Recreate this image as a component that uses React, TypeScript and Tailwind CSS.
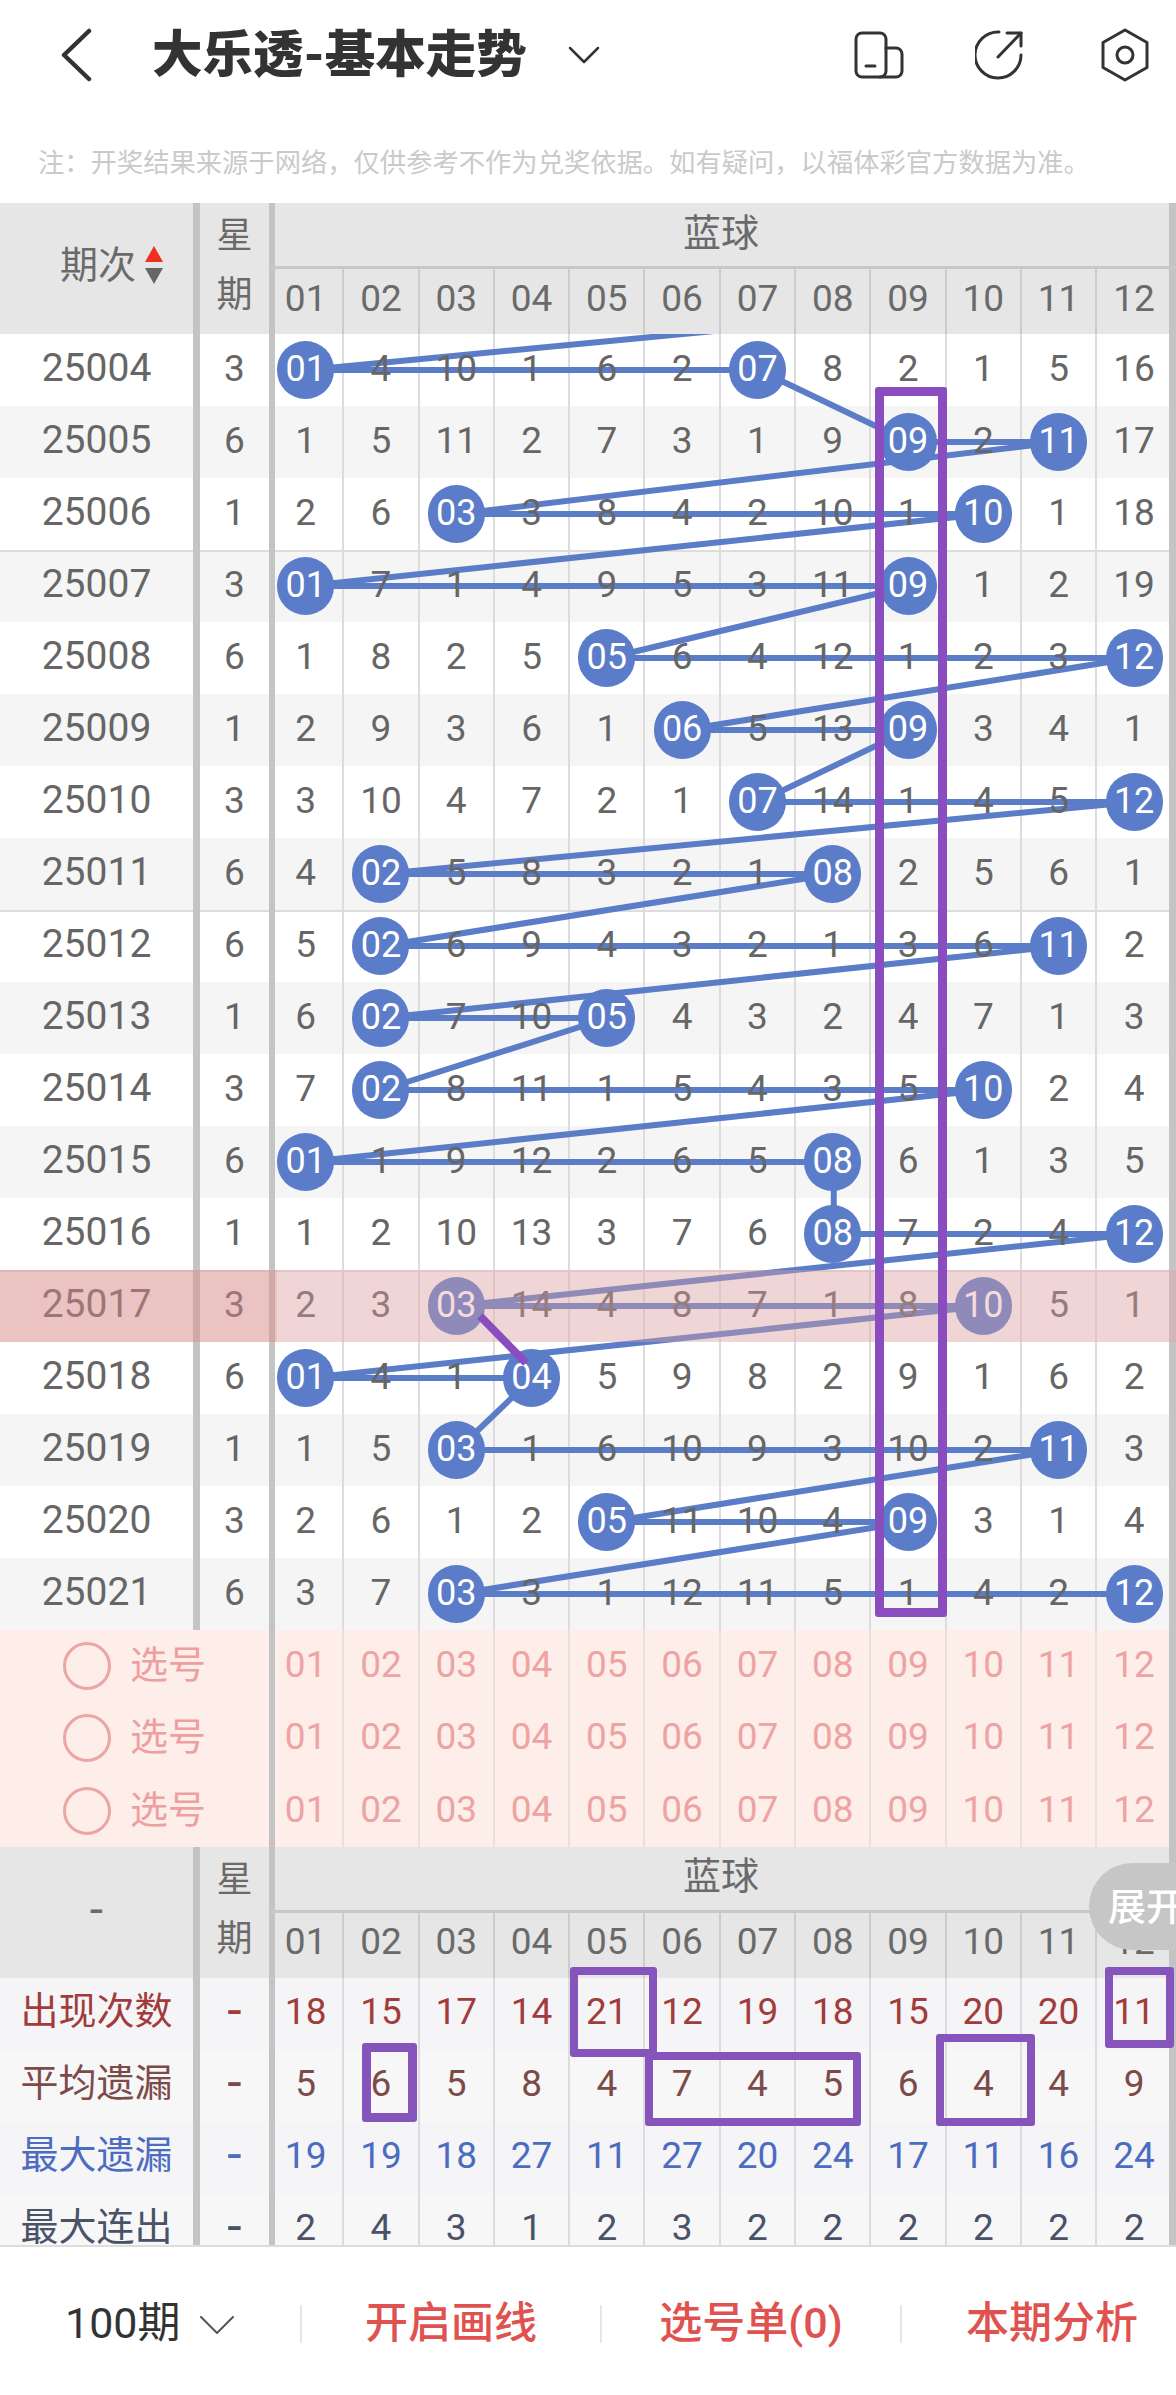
const COLS = "grid grid-cols-[200px_69px_repeat(11,75.3px)_1fr]";
const NUMS = ["01","02","03","04","05","06","07","08","09","10","11","12"];

const ROWS: { id: string; w: string; balls: number[]; v: string[] }[] = [
  { id: "25004", w: "3", balls: [1, 7], v: "01 4 10 1 6 2 07 8 2 1 5 16".split(" ") },
  { id: "25005", w: "6", balls: [9, 11], v: "1 5 11 2 7 3 1 9 09 2 11 17".split(" ") },
  { id: "25006", w: "1", balls: [3, 10], v: "2 6 03 3 8 4 2 10 1 10 1 18".split(" ") },
  { id: "25007", w: "3", balls: [1, 9], v: "01 7 1 4 9 5 3 11 09 1 2 19".split(" ") },
  { id: "25008", w: "6", balls: [5, 12], v: "1 8 2 5 05 6 4 12 1 2 3 12".split(" ") },
  { id: "25009", w: "1", balls: [6, 9], v: "2 9 3 6 1 06 5 13 09 3 4 1".split(" ") },
  { id: "25010", w: "3", balls: [7, 12], v: "3 10 4 7 2 1 07 14 1 4 5 12".split(" ") },
  { id: "25011", w: "6", balls: [2, 8], v: "4 02 5 8 3 2 1 08 2 5 6 1".split(" ") },
  { id: "25012", w: "6", balls: [2, 11], v: "5 02 6 9 4 3 2 1 3 6 11 2".split(" ") },
  { id: "25013", w: "1", balls: [2, 5], v: "6 02 7 10 05 4 3 2 4 7 1 3".split(" ") },
  { id: "25014", w: "3", balls: [2, 10], v: "7 02 8 11 1 5 4 3 5 10 2 4".split(" ") },
  { id: "25015", w: "6", balls: [1, 8], v: "01 1 9 12 2 6 5 08 6 1 3 5".split(" ") },
  { id: "25016", w: "1", balls: [8, 12], v: "1 2 10 13 3 7 6 08 7 2 4 12".split(" ") },
  { id: "25017", w: "3", balls: [3, 10], v: "2 3 03 14 4 8 7 1 8 10 5 1".split(" ") },
  { id: "25018", w: "6", balls: [1, 4], v: "01 4 1 04 5 9 8 2 9 1 6 2".split(" ") },
  { id: "25019", w: "1", balls: [3, 11], v: "1 5 03 1 6 10 9 3 10 2 11 3".split(" ") },
  { id: "25020", w: "3", balls: [5, 9], v: "2 6 1 2 05 11 10 4 09 3 1 4".split(" ") },
  { id: "25021", w: "6", balls: [3, 12], v: "3 7 03 3 1 12 11 5 1 4 2 12".split(" ") },
];

const STATS = [
  { label: "出现次数", color: "text-[#a23c3c]", bg: "bg-[#f5f5f7]", v: "18 15 17 14 21 12 19 18 15 20 20 11".split(" ") },
  { label: "平均遗漏", color: "text-[#7d4a4a]", bg: "bg-[#f7f7f7]", v: "5 6 5 8 4 7 4 5 6 4 4 9".split(" ") },
  { label: "最大遗漏", color: "text-[#4b6cc0]", bg: "bg-[#f5f5f8]", v: "19 19 18 27 11 27 20 24 17 11 16 24".split(" ") },
  { label: "最大连出", color: "text-[#4a5268]", bg: "bg-[#f7f7f8]", v: "2 4 3 1 2 3 2 2 2 2 2 2".split(" ") },
];

function cellClass(i: number, line: string) {
  if (i === 0) return `flex items-center justify-center border-r-2 ${line} shadow-[inset_6px_0_0_#c4c4c4]`;
  if (i === 11) return "flex items-center justify-center pr-[5px] shadow-[inset_-7px_0_0_#c4c4c4]";
  return `flex items-center justify-center border-r-2 ${line}`;
}

const cx = (col: number) => (col === 12 ? 1134 : 269 + 75.3 * (col - 0.5));
const cy = (row: number) => 36 + 72 * row;

function ChartLines() {
  const segs: [number, number, number, number][] = [[cx(11), cy(-1), cx(1), cy(0)]];
  ROWS.forEach((r, i) => {
    segs.push([cx(r.balls[0]), cy(i), cx(r.balls[1]), cy(i)]);
    const next = ROWS[i + 1];
    if (next) segs.push([cx(r.balls[1]), cy(i), cx(next.balls[0]), cy(i + 1)]);
  });
  return (
    <svg className="absolute left-0 top-0 z-[5] w-[1176px] h-[1296px]" viewBox="0 0 1176 1296">
      {segs.map((s, i) => (
        <line key={i} x1={s[0]} y1={s[1]} x2={s[2]} y2={s[3]} stroke="#5b7cc6" strokeWidth={6} />
      ))}
    </svg>
  );
}

function TableHeader({ sort }: { sort: boolean }) {
  return (
    <div className={`${COLS} grid-rows-[66px_65px] h-[131px] bg-[#e6e6e6] text-[#6a6a6a]`}>
      <div className="row-span-2 flex items-center border-r-[7px] border-[#c4c4c4] pb-[8px]">
        {sort ? (
          <div className="flex items-center gap-[8px] pl-[60px]">
            <span className="text-[38px] leading-none">期次</span>
            <svg width="20" height="40" viewBox="0 0 20 40">
              <path d="M10 1 L19 17 L1 17 Z" fill="#f0301f" />
              <path d="M10 39 L19 23 L1 23 Z" fill="#666666" />
            </svg>
          </div>
        ) : (
          <span className="w-full pt-[3px] text-center text-[48px] leading-none">-</span>
        )}
      </div>
      <div className="row-span-2 flex flex-col items-center justify-center pb-[5px] text-[36px]">
        <span className="h-[59px] leading-[59px]">星</span>
        <span className="h-[59px] leading-[59px]">期</span>
      </div>
      <div className="col-span-12 flex items-center justify-center border-b-[3px] border-[#c8c8c8] pb-[4px] pr-[3px] text-[38px] leading-none shadow-[inset_6px_0_0_#c4c4c4,inset_-7px_0_0_#c4c4c4]">
        蓝球
      </div>
      {NUMS.map((n, i) => (
        <div key={n} className={`${cellClass(i, "border-[#cccccc]")} pb-[7px] text-[37px] leading-none`}>
          {n}
        </div>
      ))}
    </div>
  );
}

function DrawRow({ r, i }: { r: (typeof ROWS)[number]; i: number }) {
  const bg = i % 2 === 0 ? "bg-white" : "bg-[#f5f5f5]";
  const rule = i === 3 || i === 8 || i === 13 ? "shadow-[inset_0_2px_0_#dddddd]" : "";
  return (
    <div className={`relative ${COLS} h-[72px] ${bg} ${rule} text-[#666666]`}>
      <div className="flex items-center justify-center border-r-[7px] border-[#c4c4c4] text-[39px] leading-none">
        <span className="relative z-10 pb-[3px]">{r.id}</span>
      </div>
      <div className="flex items-center justify-center text-[37px] leading-none">
        <span className="relative z-10 pb-[3px]">{r.w}</span>
      </div>
      {r.v.map((v, c) => (
        <div key={c} className={`${cellClass(c, "border-[#dcdcdc]")} text-[37px] leading-none`}>
          {r.balls.includes(c + 1) ? (
            <span className="relative z-10 flex h-[58px] w-[57px] shrink-0 items-center justify-center rounded-full bg-[#5b7cc8] pb-[2px] text-[36px] text-white">
              {v}
            </span>
          ) : (
            <span className="relative z-10 pb-[3px]">{v}</span>
          )}
        </div>
      ))}
      {r.id === "25017" && (
        <>
          <div className="absolute inset-0 z-20 bg-[rgba(230,160,160,0.38)]" />
          <div className="absolute left-0 top-0 bottom-0 z-20 w-[277px] bg-[rgba(214,80,80,0.13)]" />
        </>
      )}
    </div>
  );
}

function PickRow() {
  return (
    <div className={`${COLS} h-[72.33px] bg-[#fdeee9] text-[#eea3a3]`}>
      <div className="col-span-2 flex items-center pl-[63px]">
        <span className="h-[48px] w-[48px] rounded-full border-[3px] border-[#eba5a5]" />
        <span className="ml-[19px] pb-[2px] text-[38px] leading-none text-[#ee9f9f]">选号</span>
      </div>
      {NUMS.map((n, i) => (
        <div key={n} className={`${cellClass(i, "border-[#e6e0de]")} pb-[3px] text-[37px] leading-none`}>
          {n}
        </div>
      ))}
    </div>
  );
}

function StatRow({ s }: { s: (typeof STATS)[number] }) {
  return (
    <div className={`${COLS} h-[72px] shrink-0 ${s.bg} ${s.color}`}>
      <div className="flex items-center justify-center border-r-[7px] border-[#c4c4c4] pb-[5px] text-[38px] leading-none">
        {s.label}
      </div>
      <div className="flex items-center justify-center pb-[5px] text-[52px] leading-none">-</div>
      {s.v.map((v, c) => (
        <div key={c} className={`${cellClass(c, "border-[#dcdcdc]")} pb-[5px] text-[37px] leading-none`}>
          {v}
        </div>
      ))}
    </div>
  );
}

export default function App() {
  return (
    <div className="relative h-[2395px] w-[1176px] overflow-hidden bg-white font-['Roboto','Noto_Sans_CJK_SC',sans-serif]">
      {/* top bar */}
      <div className="flex h-[110px] items-center">
        <svg className="ml-[60px]" width="32" height="54" viewBox="0 0 32 54" fill="none" stroke="#333333" strokeWidth="4.5" strokeLinecap="round" strokeLinejoin="round">
          <path d="M29 3 L4 27 L29 51" />
        </svg>
        <h1 className="ml-[60px] text-[50.5px] font-extrabold leading-none text-[#333333]">大乐透-基本走势</h1>
        <svg className="ml-[41px]" width="32" height="18" viewBox="0 0 32 18" fill="none" stroke="#333333" strokeWidth="2.5" strokeLinecap="round" strokeLinejoin="round">
          <path d="M2 2 L16 16 L30 2" />
        </svg>
        <svg className="ml-[254px]" width="50" height="48" viewBox="0 0 50 48" fill="none" stroke="#333333" strokeWidth="3" strokeLinecap="round" strokeLinejoin="round">
          <rect x="2" y="2" width="30" height="44" rx="6" />
          <path d="M32 17 H42 a6 6 0 0 1 6 6 V40 a6 6 0 0 1 -6 6 H26" />
          <path d="M12 35 H21" />
        </svg>
        <svg className="ml-[71px]" width="50" height="52" viewBox="0 0 50 52" fill="none" stroke="#333333" strokeWidth="3" strokeLinecap="round" strokeLinejoin="round">
          <path d="M24 3 A23 23 0 1 0 46 26" />
          <path d="M23 28 L46 4" />
          <path d="M32 4 H46 V17" />
        </svg>
        <svg className="ml-[75px]" width="50" height="54" viewBox="0 0 50 54" fill="none" stroke="#333333" strokeWidth="3" strokeLinecap="round" strokeLinejoin="round">
          <path d="M25 2 L47 14.5 V39.5 L25 52 L3 39.5 V14.5 Z" />
          <circle cx="25" cy="27" r="8" />
        </svg>
      </div>

      {/* note */}
      <div className="flex h-[93px] items-center pl-[38px] pt-[13px] text-[26.3px] leading-none text-[#cacaca]">
        注：开奖结果来源于网络，仅供参考不作为兑奖依据。如有疑问，以福体彩官方数据为准。
      </div>

      <TableHeader sort />

      {/* draws */}
      <div className="relative h-[1296px] overflow-hidden">
        {ROWS.map((r, i) => (
          <DrawRow key={r.id} r={r} i={i} />
        ))}
        <ChartLines />
        <svg className="absolute left-0 top-0 z-[25] h-[1296px] w-[1176px]" viewBox="0 0 1176 1296">
          <line x1="480" y1="982" x2="526" y2="1029" stroke="#8a4dbf" strokeWidth="8" />
        </svg>
      </div>

      <PickRow />
      <PickRow />
      <PickRow />

      <TableHeader sort={false} />

      {/* statistics */}
      <div className="flex h-[269px] flex-col overflow-hidden border-b-2 border-[#dddddd]">
        {STATS.map((s) => (
          <StatRow key={s.label} s={s} />
        ))}
      </div>

      {/* bottom bar */}
      <div className="flex h-[148px] items-center pt-[6px]">
        <div className="flex h-[38px] w-[302px] shrink-0 items-center border-r-2 border-[#e6e6e6] pl-[65px] text-[43px] text-[#333333]">
          <span className="leading-none">100期</span>
          <svg className="ml-[19px] mt-[4px]" width="34" height="19" viewBox="0 0 34 19" fill="none" stroke="#555555" strokeWidth="2" strokeLinecap="round" strokeLinejoin="round">
            <path d="M1 1 L17 17 L33 1" />
          </svg>
        </div>
        <div className="flex h-[38px] w-[300px] shrink-0 items-center justify-center border-r-2 border-[#e6e6e6] text-[43px] font-medium leading-none text-[#e0524f]">
          开启画线
        </div>
        <div className="flex h-[38px] w-[300px] shrink-0 items-center justify-center border-r-2 border-[#e6e6e6] text-[43px] font-medium leading-none text-[#e0524f]">
          选号单(0)
        </div>
        <div className="flex h-[38px] w-[300px] shrink-0 items-center justify-center text-[43px] font-medium leading-none text-[#e0524f]">
          本期分析
        </div>
      </div>

      {/* hand-drawn marks over the table */}
      <div className="absolute left-[875px] top-[387px] z-30 h-[1230px] w-[72px] rounded-[3px] border-[9px] border-[#8a4dbf]" />
      <div className="absolute left-[570px] top-[1967px] z-30 h-[90px] w-[87px] rounded-[3px] border-[8px] border-[#8655bb]" />
      <div className="absolute left-[1105px] top-[1967px] z-30 h-[81px] w-[69px] rounded-[3px] border-[8px] border-[#8655bb]" />
      <div className="absolute left-[645px] top-[2052px] z-30 h-[74px] w-[216px] rounded-[3px] border-[8px] border-[#8655bb]" />
      <div className="absolute left-[936px] top-[2034px] z-30 h-[92px] w-[99px] rounded-[3px] border-[8px] border-[#8655bb]" />
      <div className="absolute left-[362px] top-[2043px] z-30 h-[79px] w-[55px] rounded-[3px] border-[9px] border-[#8655bb]" />

      {/* expand pill */}
      <div className="absolute left-[1089px] top-[1863px] z-40 flex h-[87px] w-[110px] items-center whitespace-nowrap rounded-l-full bg-[#c6c6c6] pl-[19px] text-[38px] font-medium leading-none text-white">
        展开
      </div>
    </div>
  );
}
